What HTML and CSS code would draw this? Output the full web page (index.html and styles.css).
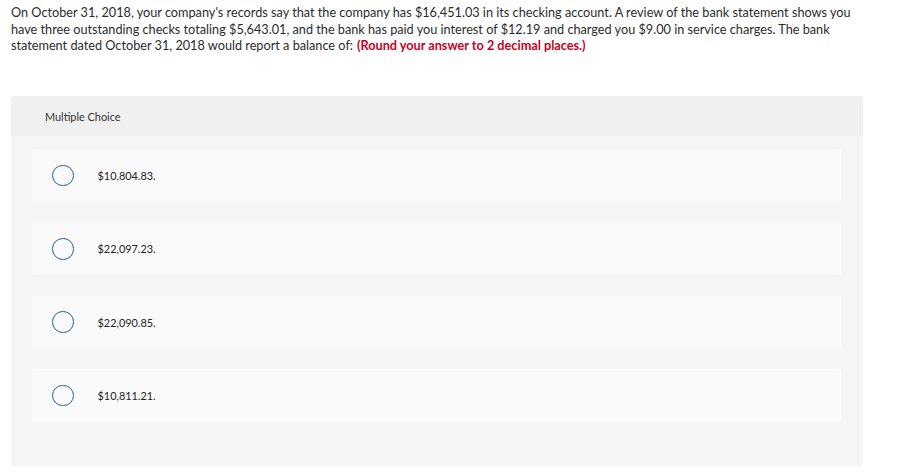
FILE: index.html
```html
<!DOCTYPE html>
<html lang="en">
<head>
<meta charset="utf-8">
<title>Multiple Choice</title>
<link rel="stylesheet" href="styles.css">
</head>
<body>
<div class="page">
  <p class="question">On October 31, 2018, your company's records say that the company has $16,451.03 in its checking account. A review of the bank statement shows you have three outstanding checks totaling $5,643.01, and the bank has paid you interest of $12.19 and charged you $9.00 in service charges. The bank statement dated October 31, 2018 would report a balance of:<strong class="note">(Round your answer to 2 decimal places.)</strong></p>
  <section class="panel">
    <div class="panel-head">Multiple Choice</div>
    <div class="panel-body">
      <label class="option"><span class="radio"></span><span class="option-text">$10,804.83.</span></label>
      <label class="option"><span class="radio"></span><span class="option-text">$22,097.23.</span></label>
      <label class="option"><span class="radio"></span><span class="option-text">$22,090.85.</span></label>
      <label class="option"><span class="radio"></span><span class="option-text">$10,811.21.</span></label>
    </div>
  </section>
</div>
</body>
</html>
```
FILE: styles.css
```css
html, body {
  margin: 0;
  padding: 0;
  background: #ffffff;
}
.page {
  padding: 4px 52px 0 11px;
  font-family: Lato, "Liberation Sans", sans-serif;
  color: #2b2b2b;
}
.question {
  margin: 0;
  font-size: 12.7px;
  line-height: 16.7px;
  width: 845px;
}
.note {
  margin-left: 4px;
  color: #c8001e;
  font-weight: 700;
}
.panel {
  margin-top: 42px;
  width: 852px;
  background: #f5f5f5;
  border-radius: 3px;
}
.panel-head {
  height: 40px;
  display: flex;
  align-items: center;
  padding-left: 34px;
  background: #f0f0f0;
  border-radius: 3px 3px 0 0;
  font-size: 10.9px;
  color: #333;
}
.panel-body {
  padding: 13px 22px 44px 21px;
  display: flex;
  flex-direction: column;
  gap: 20.67px;
}
.option {
  height: 52.67px;
  display: flex;
  align-items: center;
  padding-left: 20px;
  background: #fafafa;
  border-radius: 3px;
}
.radio {
  width: 19.5px;
  height: 19.5px;
  border: 1.4px solid #1d5d98;
  border-radius: 50%;
  flex: none;
}
.option-text {
  margin-left: 24px;
  font-size: 10.9px;
  color: #222;
}
```
